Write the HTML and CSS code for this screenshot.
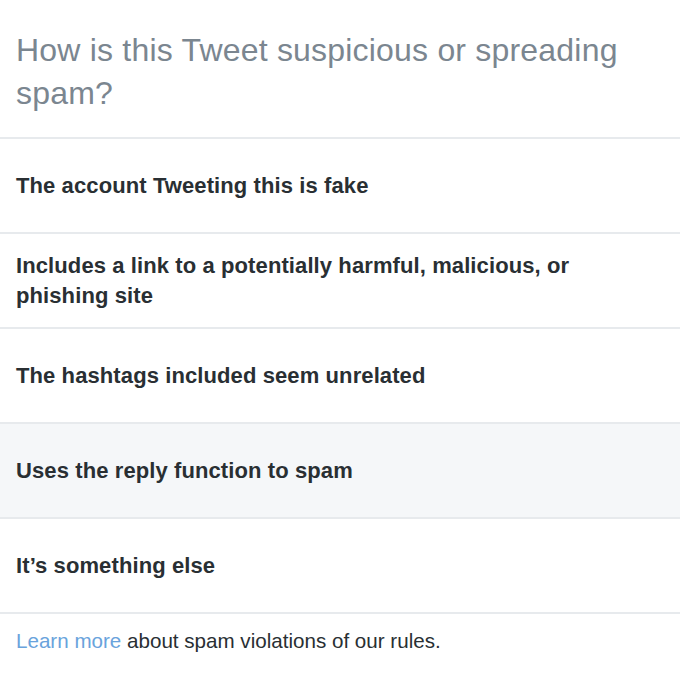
FILE: index.html
```html
<!DOCTYPE html>
<html lang="en">
<head>
<meta charset="utf-8">
<title>Report spam</title>
<link rel="stylesheet" href="styles.css">
</head>
<body>
<div class="sheet">
  <h1 class="question">How is this Tweet suspicious or spreading spam?</h1>
  <ul class="options">
    <li class="option">The account Tweeting this is fake</li>
    <li class="option">Includes a link to a potentially harmful, malicious, or phishing site</li>
    <li class="option">The hashtags included seem unrelated</li>
    <li class="option option-active">Uses the reply function to spam</li>
    <li class="option">It’s something else</li>
  </ul>
  <p class="footer"><a class="link" href="#">Learn more</a> about spam violations of our rules.</p>
</div>
</body>
</html>
```
FILE: styles.css
```css
html, body {
  margin: 0;
  padding: 0;
  background: #ffffff;
}
body {
  font-family: "Liberation Sans", Arial, sans-serif;
  width: 680px;
  overflow: hidden;
}
.sheet {
  display: flex;
  flex-direction: column;
}
.question {
  margin: 0;
  padding: 29px 40px 22px 16px;
  font-size: 32px;
  line-height: 43px;
  font-weight: 300;
  letter-spacing: 0.2px;
  color: #7b8690;
  border-bottom: 2px solid #e7eaed;
}
.options {
  list-style: none;
  margin: 0;
  padding: 0;
}
.option {
  box-sizing: border-box;
  height: 95px;
  display: flex;
  align-items: center;
  padding: 0 90px 0 16px;
  font-size: 22px;
  line-height: 30px;
  font-weight: 700;
  letter-spacing: 0.1px;
  color: #292f33;
  border-bottom: 2px solid #e7eaed;
}
.option-active {
  background: #f5f7f9;
}
.footer {
  margin: 0;
  padding: 15px 16px;
  font-size: 20.6px;
  line-height: 24px;
  color: #292f33;
}
.link {
  color: #69a3dc;
  text-decoration: none;
}
```
